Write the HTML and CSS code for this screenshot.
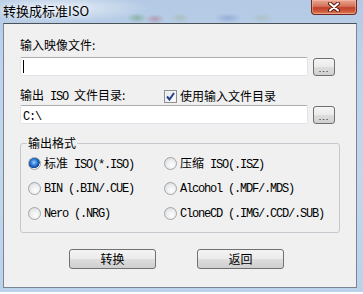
FILE: index.html
```html
<!DOCTYPE html>
<html lang="zh-CN">
  <head>
    <meta charset="UTF-8" />
    <title>转换成标准ISO</title>
    <link rel="stylesheet" href="styles.css">
  </head>
  <body>
    <div class="win">
      <div class="titlebar">
        <span class="title">转换成标准ISO</span>
        <div class="close">
          <svg width="14" height="10" viewBox="0 0 14 10">
            <path d="M3 1.5 L11 8.5 M11 1.5 L3 8.5" stroke="#5a1a10" stroke-width="4" stroke-linecap="round" />
            <path d="M3 1.5 L11 8.5 M11 1.5 L3 8.5" stroke="#ffffff" stroke-width="2" stroke-linecap="round" />
          </svg>
        </div>
      </div>

      <div class="client">
        <div class="label">输入映像文件:</div>
        <div class="field">
          <div class="input"><span class="caret"></span></div>
          <button class="browse">...</button>
        </div>

        <div class="row-out">
          <span class="label">输出<span class="a"> ISO </span>文件目录:</span>
          <label class="check">
            <span class="box">
              <svg width="9" height="9" viewBox="0 0 9 9">
                <path d="M1 4.5 L3.5 7.5 L8 1" fill="none" stroke="#1f3f8f" stroke-width="2" />
              </svg>
            </span>
            使用输入文件目录
          </label>
        </div>
        <div class="field">
          <div class="input"><span class="a">C:\</span></div>
          <button class="browse">...</button>
        </div>

        <fieldset class="group">
          <legend>输出格式</legend>
          <div class="opts">
            <label class="opt"><span class="radio on"></span><span>标准<span class="a"> ISO(*.ISO)</span></span></label>
            <label class="opt"><span class="radio"></span><span>压缩<span class="a"> ISO(.ISZ)</span></span></label>
            <label class="opt"><span class="radio"></span><span class="a">BIN (.BIN/.CUE)</span></label>
            <label class="opt"><span class="radio"></span><span class="a">Alcohol (.MDF/.MDS)</span></label>
            <label class="opt"><span class="radio"></span><span class="a">Nero (.NRG)</span></label>
            <label class="opt"><span class="radio"></span><span class="a">CloneCD (.IMG/.CCD/.SUB)</span></label>
          </div>
        </fieldset>

        <div class="actions">
          <button class="btn">转换</button>
          <button class="btn">返回</button>
        </div>
      </div>
    </div>
  </body>
</html>
```

FILE: styles.css
```css
body {
  margin: 0;
  background: #ffffff;
  font-family: "Noto Sans CJK SC", "Liberation Sans", sans-serif;
  font-size: 12px;
  color: #000;
}
.win {
  width: 363px;
  height: 292px;
  overflow: hidden;
  background:
    radial-gradient(ellipse 10px 5px at 137px 18px, rgba(90, 150, 90, 0.45), transparent),
    radial-gradient(ellipse 10px 5px at 155px 19px, rgba(170, 90, 110, 0.4), transparent),
    radial-gradient(ellipse 10px 5px at 180px 18px, rgba(150, 170, 120, 0.35), transparent),
    radial-gradient(ellipse 14px 5px at 228px 18px, rgba(90, 120, 190, 0.35), transparent),
    radial-gradient(ellipse 12px 5px at 262px 18px, rgba(150, 170, 130, 0.3), transparent),
    radial-gradient(ellipse 90px 14px at 60px 8px, rgba(235, 241, 249, 0.9), transparent),
    linear-gradient(180deg, #b3c9e4 0%, #bed3eb 20%, #c3d6ec 60%, #bcd2ea 100%);
}
.titlebar {
  height: 23px;
  display: flex;
  align-items: flex-start;
}
.title {
  padding: 3px 0 0 3px;
  font-size: 13px;
  line-height: 15px;
  text-shadow: 0 0 5px rgba(255, 255, 255, 0.9);
}
.close {
  margin-left: auto;
  margin-right: 6px;
  width: 44px;
  height: 14px;
  border: 1px solid #6e2a1e;
  border-top: none;
  border-radius: 0 0 4px 4px;
  background: linear-gradient(180deg, #e9a593 0%, #d5735a 45%, #c0402a 55%, #d0603f 85%, #e08a68 100%);
  box-shadow: inset 0 0 0 1px rgba(255, 200, 180, 0.45);
  display: flex;
  align-items: center;
  justify-content: center;
}
.client {
  box-sizing: border-box;
  width: 354px;
  height: 265px;
  margin-left: 3px;
  padding: 13px 0 0 16px;
  background: #f0f0f0;
  border: 1px solid #7a8696;
  border-top-color: #4b5159;
}
.label {
  line-height: 16px;
}
.a {
  font-family: "Liberation Mono", monospace;
  letter-spacing: -1.2px;
}
.field {
  display: flex;
  align-items: flex-end;
  gap: 5px;
  margin-top: 4px;
}
.input {
  box-sizing: border-box;
  width: 288px;
  height: 19px;
  padding: 1px 2px;
  background: #fff;
  border: 1px solid #e2e3ea;
  border-top-color: #abadb3;
  border-radius: 2px;
  line-height: 15px;
}
.caret {
  display: inline-block;
  width: 1px;
  height: 13px;
  margin-top: 1px;
  background: #000;
}
.browse {
  box-sizing: border-box;
  width: 22px;
  height: 18px;
  padding: 4px 0 0;
  border: 1px solid #707070;
  border-radius: 3px;
  background: linear-gradient(180deg, #f4f4f4 0%, #ebebeb 48%, #dddddd 52%, #cfcfcf 100%);
  font-family: "Liberation Sans", sans-serif;
  font-size: 9px;
  line-height: 10px;
  letter-spacing: 1px;
  color: #000;
}
.row-out {
  display: grid;
  grid-template-columns: 144px 1fr;
  align-items: center;
  height: 16px;
  margin-top: 11px;
}
.row-out + .field {
  margin-top: 2px;
}
.check {
  display: flex;
  align-items: center;
  gap: 3px;
  line-height: 16px;
}
.box {
  box-sizing: border-box;
  width: 13px;
  height: 13px;
  border: 1px solid #8e8f8f;
  background: linear-gradient(135deg, #e4e5e8, #ffffff);
  box-shadow: inset 0 0 0 1px #f4f4f4;
  display: flex;
  align-items: center;
  justify-content: center;
}
.group {
  box-sizing: border-box;
  width: 320px;
  margin: 11px 0 0;
  padding: 0 0 6px 7px;
  border: 1px solid #c5c8cc;
  border-radius: 3px;
  min-width: 0;
}
.group legend {
  padding: 0 1px;
  margin-left: -1px;
  line-height: 16px;
}
.opts {
  display: grid;
  grid-template-columns: 136px 1fr;
  grid-auto-rows: 25px;
}
.opt {
  display: flex;
  align-items: center;
  gap: 3px;
  line-height: 16px;
  white-space: pre;
}
.radio {
  box-sizing: border-box;
  width: 13px;
  height: 13px;
  border-radius: 50%;
  border: 1px solid #a2a5a8;
  background: radial-gradient(circle at 60% 65%, #ffffff 0%, #e9eaec 55%, #cdd0d4 100%);
  flex: none;
}
.radio.on {
  background:
    radial-gradient(circle at 45% 40%, #9cd0ff 0%, #2d7ad6 35%, #13449a 62%, transparent 66%),
    radial-gradient(circle at 60% 65%, #ffffff 0%, #e9eaec 55%, #cdd0d4 100%);
}
.actions {
  display: flex;
  gap: 41px;
  margin: 16px 0 0 49px;
}
.btn {
  box-sizing: border-box;
  width: 87px;
  height: 20px;
  padding: 0;
  border: 1px solid #707070;
  border-radius: 3px;
  background: linear-gradient(180deg, #f4f4f4 0%, #ebebeb 48%, #dddddd 52%, #cfcfcf 100%);
  font-family: "Noto Sans CJK SC", sans-serif;
  font-size: 12px;
  line-height: 18px;
  color: #000;
}
```
